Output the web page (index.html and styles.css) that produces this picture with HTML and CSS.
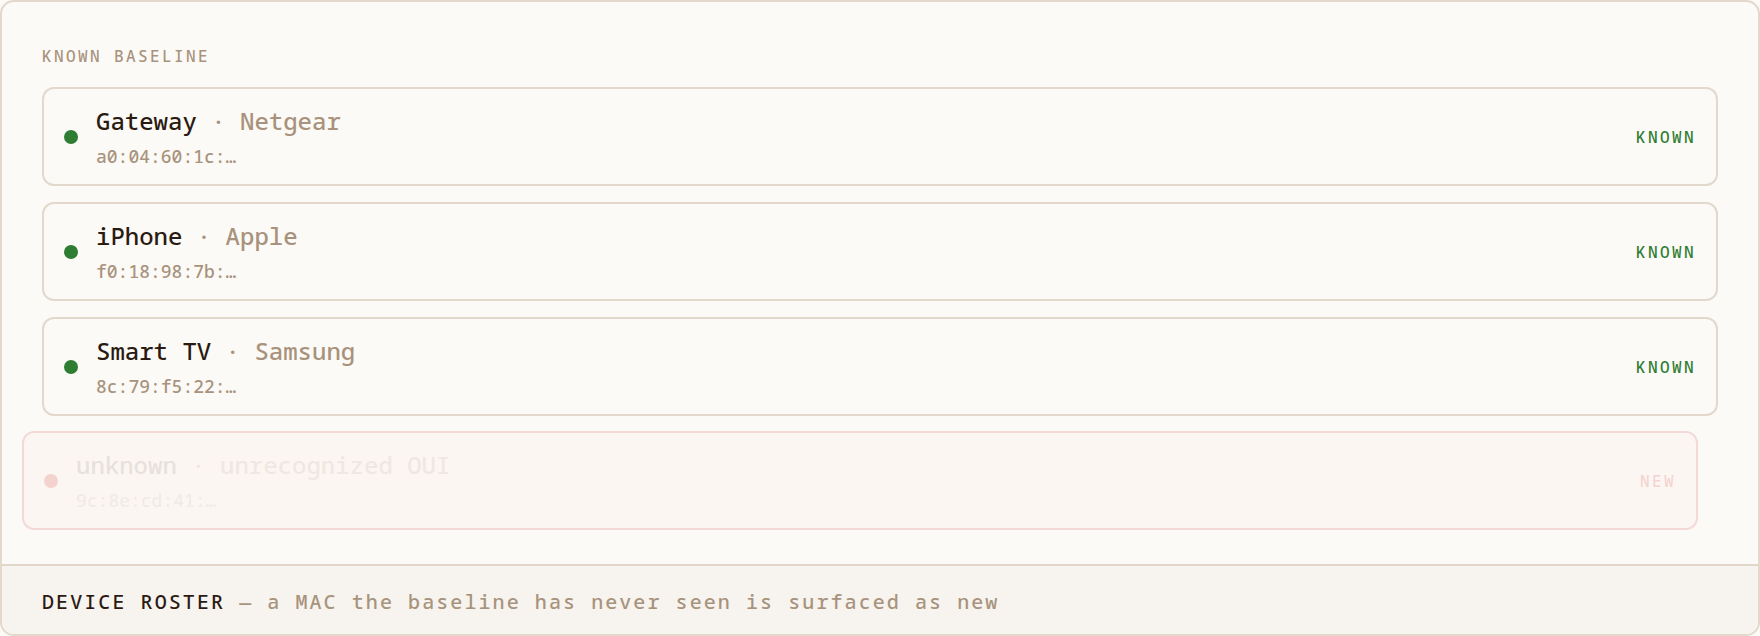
FILE: index.html
```html
<!DOCTYPE html>
<html lang="en">
<head>
  <meta charset="UTF-8" />
  <title>Device Roster</title>
  <link rel="stylesheet" href="styles.css">
</head>
<body>

  <div class="panel">
    <div class="roster">
      <div class="section-label">Known baseline</div>

      <div class="device-list">
        <div class="device">
          <span class="dot"></span>
          <div class="info">
            <div class="name">Gateway <span class="vendor">· Netgear</span></div>
            <div class="mac">a0:04:60:1c:…</div>
          </div>
          <span class="status">KNOWN</span>
        </div>

        <div class="device">
          <span class="dot"></span>
          <div class="info">
            <div class="name">iPhone <span class="vendor">· Apple</span></div>
            <div class="mac">f0:18:98:7b:…</div>
          </div>
          <span class="status">KNOWN</span>
        </div>

        <div class="device">
          <span class="dot"></span>
          <div class="info">
            <div class="name">Smart TV <span class="vendor">· Samsung</span></div>
            <div class="mac">8c:79:f5:22:…</div>
          </div>
          <span class="status">KNOWN</span>
        </div>

        <!-- new arrival, still sliding in -->
        <div class="device device-new entering">
          <span class="dot"></span>
          <div class="info">
            <div class="name">unknown <span class="vendor">· unrecognized OUI</span></div>
            <div class="mac">9c:8e:cd:41:…</div>
          </div>
          <span class="status">NEW</span>
        </div>
      </div>
    </div>

    <div class="caption">
      <span class="caption-title">DEVICE ROSTER</span> — a MAC the baseline has never seen is surfaced as new
    </div>
  </div>

</body>
</html>
```

FILE: styles.css
```css
html, body {
  margin: 0;
  padding: 0;
}

body {
  font-family: 'Noto Sans Mono', 'DejaVu Sans Mono', monospace;
  font-weight: 500;
  background: #fcfaf6;
  color: #2b1a12;
}

.panel {
  box-sizing: border-box;
  height: 636px;
  display: flex;
  flex-direction: column;
  border: 2px solid #e2d8cb;
  border-radius: 14px;
  background: #fcfaf6;
  overflow: hidden;
}

.roster {
  flex: 1;
  padding: 45px 40px 0;
}

.section-label {
  font-size: 16px;
  line-height: 19px;
  letter-spacing: 0.15em;
  text-transform: uppercase;
  color: #a8937d;
  margin-bottom: 21px;
}

.device-list {
  display: flex;
  flex-direction: column;
  gap: 16px;
}

.device {
  display: flex;
  align-items: center;
  gap: 18px;
  padding: 17px 20px 17px 20px;
  border: 2px solid #e2d8cb;
  border-radius: 12px;
  background: #fcfaf6;
}

.dot {
  flex: none;
  width: 14px;
  height: 14px;
  border-radius: 50%;
  background: #2e7d32;
}

.info {
  flex: 1;
}

.name {
  font-size: 24px;
  line-height: 29px;
  color: #2b1a12;
}

.vendor {
  color: #a8927c;
}

.mac {
  margin-top: 10px;
  font-size: 18px;
  line-height: 22px;
  color: #a8937d;
}

.status {
  font-size: 16px;
  letter-spacing: 0.15em;
  color: #2e7d32;
}

.device-new {
  border-color: #f4dad6;
  background: #fcf6f3;
}

.device-new .dot {
  background: #f4d2cd;
}

.device-new .name {
  color: #e7e1dc;
}

.device-new .vendor {
  color: #efe8e2;
}

.device-new .mac {
  color: #f0ebe6;
}

.device-new .status {
  color: #f3d4d0;
}

.entering {
  transform: translate(-20px, -1px);
}

.caption {
  padding: 24px 40px 20px;
  border-top: 2px solid #e0d6c9;
  background: #f7f3ee;
  font-size: 20px;
  line-height: 24px;
  letter-spacing: 2.08px;
  color: #a8937d;
}

.caption-title {
  color: #2b1a12;
}
```
